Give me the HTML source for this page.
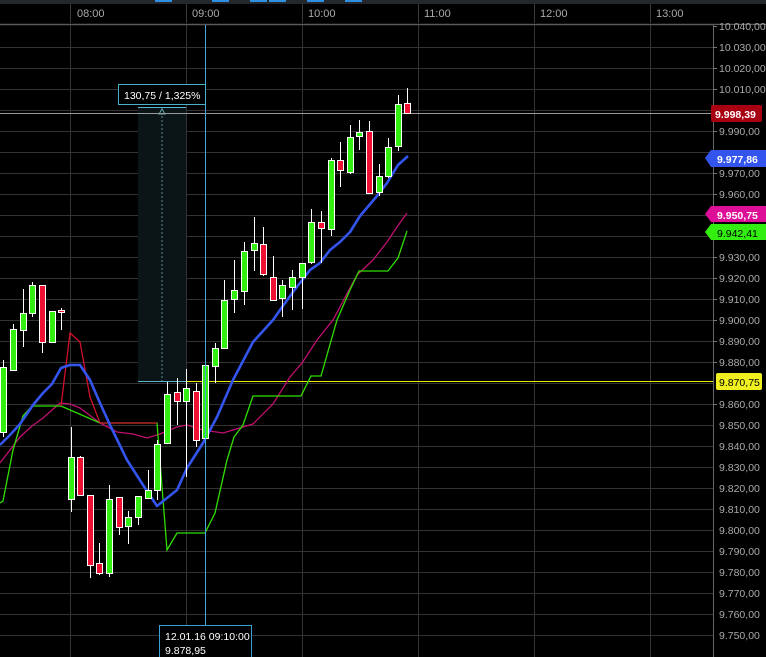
<!DOCTYPE html>
<html><head><meta charset="utf-8"><style>
html,body{margin:0;padding:0;background:#000;width:766px;height:657px;overflow:hidden}
svg{display:block}
text{font-family:"Liberation Sans",Arial,sans-serif}
</style></head><body>
<svg width="766" height="657" viewBox="0 0 766 657" xmlns="http://www.w3.org/2000/svg">
<rect width="766" height="657" fill="#000"/>
<rect x="0" y="0" width="766" height="4" fill="#24272c"/>
<g fill="#2f8fe0"><rect x="155" y="0" width="17" height="2"/><rect x="212" y="0" width="17" height="2"/><rect x="250" y="0" width="17" height="2"/><rect x="269" y="0" width="17" height="2"/><rect x="307" y="0" width="17" height="2"/><rect x="345" y="0" width="17" height="2"/></g>
<g stroke="#333" stroke-width="1">
<line x1="0" y1="47.5" x2="713" y2="47.5"/><line x1="0" y1="68.5" x2="713" y2="68.5"/><line x1="0" y1="89.5" x2="713" y2="89.5"/><line x1="0" y1="110.5" x2="713" y2="110.5"/><line x1="0" y1="131.5" x2="713" y2="131.5"/><line x1="0" y1="152.5" x2="713" y2="152.5"/><line x1="0" y1="173.5" x2="713" y2="173.5"/><line x1="0" y1="194.5" x2="713" y2="194.5"/><line x1="0" y1="215.5" x2="713" y2="215.5"/><line x1="0" y1="236.5" x2="713" y2="236.5"/><line x1="0" y1="257.5" x2="713" y2="257.5"/><line x1="0" y1="278.5" x2="713" y2="278.5"/><line x1="0" y1="299.5" x2="713" y2="299.5"/><line x1="0" y1="320.5" x2="713" y2="320.5"/><line x1="0" y1="341.5" x2="713" y2="341.5"/><line x1="0" y1="362.5" x2="713" y2="362.5"/><line x1="0" y1="383.5" x2="713" y2="383.5"/><line x1="0" y1="404.5" x2="713" y2="404.5"/><line x1="0" y1="425.5" x2="713" y2="425.5"/><line x1="0" y1="446.5" x2="713" y2="446.5"/><line x1="0" y1="467.5" x2="713" y2="467.5"/><line x1="0" y1="488.5" x2="713" y2="488.5"/><line x1="0" y1="509.5" x2="713" y2="509.5"/><line x1="0" y1="530.5" x2="713" y2="530.5"/><line x1="0" y1="551.5" x2="713" y2="551.5"/><line x1="0" y1="572.5" x2="713" y2="572.5"/><line x1="0" y1="593.5" x2="713" y2="593.5"/><line x1="0" y1="614.5" x2="713" y2="614.5"/><line x1="0" y1="635.5" x2="713" y2="635.5"/>
<line x1="70.5" y1="4" x2="70.5" y2="657"/><line x1="186.5" y1="4" x2="186.5" y2="657"/><line x1="302.5" y1="4" x2="302.5" y2="657"/><line x1="418.5" y1="4" x2="418.5" y2="657"/><line x1="534.5" y1="4" x2="534.5" y2="657"/><line x1="650.5" y1="4" x2="650.5" y2="657"/>
</g>
<rect x="0" y="4" width="766" height="20" fill="#000"/>
<g stroke="#3a3a3a"><line x1="70.5" y1="4" x2="70.5" y2="23"/><line x1="186.5" y1="4" x2="186.5" y2="23"/><line x1="302.5" y1="4" x2="302.5" y2="23"/><line x1="418.5" y1="4" x2="418.5" y2="23"/><line x1="534.5" y1="4" x2="534.5" y2="23"/><line x1="650.5" y1="4" x2="650.5" y2="23"/></g>
<line x1="0" y1="24.5" x2="766" y2="24.5" stroke="#5a5a5a" stroke-width="1.5"/>
<g fill="#aaa" font-size="11"><text x="77" y="17">08:00</text><text x="192" y="17">09:00</text><text x="308" y="17">10:00</text><text x="424" y="17">11:00</text><text x="540" y="17">12:00</text><text x="656" y="17">13:00</text></g>
<rect x="138" y="108" width="48" height="273" fill="#0b1517"/>
<line x1="162" y1="116" x2="162" y2="381" stroke="#4f8a90" stroke-width="1" stroke-dasharray="2,2"/>
<path d="M159 114 L162 109 L165 114 Z" fill="none" stroke="#6aa" stroke-width="1"/>
<line x1="138" y1="381.5" x2="186" y2="381.5" stroke="#59b8d0"/>
<line x1="138" y1="107.5" x2="186" y2="107.5" stroke="#59b8d0"/>
<line x1="186" y1="381.5" x2="713" y2="381.5" stroke="#e8e800"/>
<line x1="0" y1="113.5" x2="713" y2="113.5" stroke="#9a9a9a"/>
<polyline fill="none" stroke="#c01070" stroke-width="1.3" points="0,463 10,450 20,437 32,426 43,418 60,403 70,404 80,408 100,423 117,432 133,434 147,438 160,434 177,427 187,425 203,430 223,433 233,430 253,424 273,404 290,377 302,363 317,340 333,320 357,275 373,260 387,242 397,227 407,213"/>
<polyline fill="none" stroke="#30e000" stroke-width="1.3" points="0,503 3,501 13,450 23,416 32,406 61,406 100,423 157,423 167,550 177,533 205,533 215,513 227,460 234,437 243,425 253,396 301,396 311,376 321,376 337,320 350,290 359,271 388,271 398,258 407,231"/>
<polyline fill="none" stroke="#d0102a" stroke-width="1.3" points="61,406 70,333 80,342 90,397 100,423 157,423"/>
<polyline fill="none" stroke="#3355ee" stroke-width="2.6" stroke-linejoin="round" points="0,445 10,435 20,424 33,405 43,393 52,384 61,368 70,365 80,365 90,380 100,403 110,425 127,460 143,485 157,506 167,498 177,490 187,468 203,443 217,417 233,380 253,342 273,320 280,310 293,292 310,270 320,263 330,250 340,242 350,232 360,216 377,196 387,183 398,165 408,156"/>
<g stroke="#fff" stroke-width="1">
<line x1="3.5" y1="360" x2="3.5" y2="437"/><line x1="13.5" y1="324" x2="13.5" y2="371"/><line x1="23.5" y1="289" x2="23.5" y2="347"/><line x1="32.5" y1="282" x2="32.5" y2="317"/><line x1="42.5" y1="285" x2="42.5" y2="353"/><line x1="52.5" y1="311" x2="52.5" y2="342"/><line x1="61.5" y1="308" x2="61.5" y2="330"/>
<line x1="71.5" y1="427" x2="71.5" y2="512"/><line x1="80.5" y1="456" x2="80.5" y2="495"/><line x1="90.5" y1="495" x2="90.5" y2="578"/><line x1="99.5" y1="543" x2="99.5" y2="575"/><line x1="109.5" y1="485" x2="109.5" y2="577"/><line x1="119.5" y1="497" x2="119.5" y2="535"/><line x1="128.5" y1="511" x2="128.5" y2="544"/><line x1="138.5" y1="496" x2="138.5" y2="525"/><line x1="148.5" y1="470" x2="148.5" y2="498"/><line x1="157.5" y1="440" x2="157.5" y2="500"/><line x1="167.5" y1="382" x2="167.5" y2="443"/><line x1="177.5" y1="378" x2="177.5" y2="425"/><line x1="186.5" y1="369" x2="186.5" y2="477"/><line x1="196.5" y1="383" x2="196.5" y2="447"/><line x1="205.5" y1="365" x2="205.5" y2="438"/><line x1="215.5" y1="343" x2="215.5" y2="383"/><line x1="224.5" y1="280" x2="224.5" y2="349"/><line x1="234.5" y1="260" x2="234.5" y2="313"/><line x1="244.5" y1="242" x2="244.5" y2="305"/><line x1="254.5" y1="217" x2="254.5" y2="271"/><line x1="263.5" y1="227" x2="263.5" y2="276"/><line x1="273.5" y1="256" x2="273.5" y2="300"/><line x1="282.5" y1="280" x2="282.5" y2="317"/><line x1="292.5" y1="270" x2="292.5" y2="310"/><line x1="302.5" y1="263" x2="302.5" y2="309"/><line x1="311.5" y1="209" x2="311.5" y2="264"/><line x1="321.5" y1="211" x2="321.5" y2="263"/><line x1="331.5" y1="158" x2="331.5" y2="236"/><line x1="340.5" y1="142" x2="340.5" y2="187"/><line x1="350.5" y1="125" x2="350.5" y2="174"/><line x1="359.5" y1="120" x2="359.5" y2="150"/><line x1="369.5" y1="121" x2="369.5" y2="194"/><line x1="379.5" y1="164" x2="379.5" y2="196"/><line x1="388.5" y1="138" x2="388.5" y2="178"/><line x1="398.5" y1="95" x2="398.5" y2="151"/><line x1="407.5" y1="88" x2="407.5" y2="113"/>
</g>
<g stroke="#fff" stroke-width="1">
<g fill="#33ee11">
<rect x="0.5" y="367.5" width="6" height="65"/><rect x="10.5" y="329.5" width="6" height="41"/><rect x="20.5" y="313.5" width="6" height="17"/><rect x="29.5" y="285.5" width="6" height="28"/><rect x="49.5" y="311.5" width="6" height="31"/>
<rect x="68.5" y="457.5" width="6" height="42"/><rect x="106.5" y="499.5" width="6" height="74"/><rect x="125.5" y="517.5" width="6" height="9"/><rect x="135.5" y="496.5" width="6" height="21"/><rect x="145.5" y="490.5" width="6" height="8"/><rect x="154.5" y="444.5" width="6" height="46"/><rect x="164.5" y="394.5" width="6" height="49"/><rect x="183.5" y="388.5" width="6" height="13"/><rect x="202.5" y="365.5" width="6" height="73"/><rect x="212.5" y="348.5" width="6" height="18"/><rect x="221.5" y="300.5" width="6" height="48"/><rect x="231.5" y="290.5" width="6" height="9"/><rect x="241.5" y="251.5" width="6" height="40"/><rect x="251.5" y="243.5" width="6" height="7"/><rect x="279.5" y="285.5" width="6" height="13"/><rect x="289.5" y="277.5" width="6" height="10"/><rect x="299.5" y="263.5" width="6" height="14"/><rect x="308.5" y="222.5" width="6" height="40"/><rect x="328.5" y="160.5" width="6" height="69"/><rect x="347.5" y="137.5" width="6" height="35"/><rect x="356.5" y="132.5" width="6" height="4"/><rect x="376.5" y="176.5" width="6" height="16"/><rect x="385.5" y="147.5" width="6" height="29"/><rect x="395.5" y="104.5" width="6" height="42"/>
</g>
<g fill="#ee1133">
<rect x="39.5" y="285.5" width="6" height="57"/><rect x="58.5" y="310.5" width="6" height="2"/><rect x="77.5" y="457.5" width="6" height="38"/><rect x="87.5" y="495.5" width="6" height="70"/><rect x="96.5" y="563.5" width="6" height="10"/><rect x="116.5" y="497.5" width="6" height="30"/><rect x="174.5" y="392.5" width="6" height="9"/><rect x="193.5" y="391.5" width="6" height="49"/><rect x="260.5" y="244.5" width="6" height="30"/><rect x="270.5" y="277.5" width="6" height="23"/><rect x="318.5" y="222.5" width="6" height="6"/><rect x="337.5" y="160.5" width="6" height="10"/><rect x="366.5" y="131.5" width="6" height="62"/><rect x="404.5" y="103.5" width="6" height="10"/>
</g></g>
<line x1="205.5" y1="25" x2="205.5" y2="626" stroke="#4aa8d8"/>
<rect x="118.5" y="84.5" width="87" height="20" fill="#000" stroke="#4ab0c8"/>
<text x="124" y="99" fill="#fff" font-size="10.5">130,75 / 1,325%</text>
<rect x="159.5" y="625.5" width="92" height="32" fill="#000" stroke="#3aa0d8"/>
<text x="165" y="640" fill="#fff" font-size="10.5">12.01.16 09:10:00</text>
<text x="165" y="654" fill="#fff" font-size="10.5">9.878,95</text>
<rect x="713" y="25" width="53" height="632" fill="#000"/>
<line x1="713.5" y1="25" x2="713.5" y2="657" stroke="#666"/>
<g fill="#aaa" font-size="10.5">
<text x="719" y="30">10.040,00</text><text x="719" y="51">10.030,00</text><text x="719" y="72">10.020,00</text><text x="719" y="93">10.010,00</text><text x="719" y="135">9.990,00</text><text x="719" y="177">9.970,00</text><text x="719" y="198">9.960,00</text><text x="719" y="261">9.930,00</text><text x="719" y="282">9.920,00</text><text x="719" y="303">9.910,00</text><text x="719" y="324">9.900,00</text><text x="719" y="345">9.890,00</text><text x="719" y="366">9.880,00</text><text x="719" y="408">9.860,00</text><text x="719" y="429">9.850,00</text><text x="719" y="450">9.840,00</text><text x="719" y="471">9.830,00</text><text x="719" y="492">9.820,00</text><text x="719" y="513">9.810,00</text><text x="719" y="534">9.800,00</text><text x="719" y="555">9.790,00</text><text x="719" y="576">9.780,00</text><text x="719" y="597">9.770,00</text><text x="719" y="618">9.760,00</text><text x="719" y="639">9.750,00</text>
</g>
<g stroke="#777"><line x1="713" y1="26.5" x2="717" y2="26.5"/><line x1="713" y1="47.5" x2="717" y2="47.5"/><line x1="713" y1="68.5" x2="717" y2="68.5"/><line x1="713" y1="89.5" x2="717" y2="89.5"/><line x1="713" y1="131.5" x2="717" y2="131.5"/><line x1="713" y1="173.5" x2="717" y2="173.5"/><line x1="713" y1="194.5" x2="717" y2="194.5"/><line x1="713" y1="257.5" x2="717" y2="257.5"/><line x1="713" y1="278.5" x2="717" y2="278.5"/><line x1="713" y1="299.5" x2="717" y2="299.5"/><line x1="713" y1="320.5" x2="717" y2="320.5"/><line x1="713" y1="341.5" x2="717" y2="341.5"/><line x1="713" y1="362.5" x2="717" y2="362.5"/><line x1="713" y1="404.5" x2="717" y2="404.5"/></g>
<rect x="711" y="105" width="51" height="17" rx="2" fill="#a80012"/>
<text x="715" y="118" fill="#fff" font-size="10.5" font-weight="bold">9.998,39</text>
<path d="M705 158 L711 150 L766 150 L766 167 L711 167 Z" fill="#3355ee"/>
<text x="717" y="163" fill="#fff" font-size="10.5" font-weight="bold">9.977,86</text>
<path d="M705 214 L711 206 L766 206 L766 222 L711 222 Z" fill="#dd0f99"/>
<text x="717" y="219" fill="#fff" font-size="10.5" font-weight="bold">9.950,75</text>
<path d="M705 232 L711 224 L766 224 L766 240 L711 240 Z" fill="#33ee11"/>
<text x="717" y="237" fill="#000" font-size="10.5">9.942,41</text>
<rect x="716" y="373" width="46" height="17" rx="2" fill="#f0f020"/>
<text x="719" y="386" fill="#000" font-size="10.5">9.870,75</text>
</svg>
</body></html>
